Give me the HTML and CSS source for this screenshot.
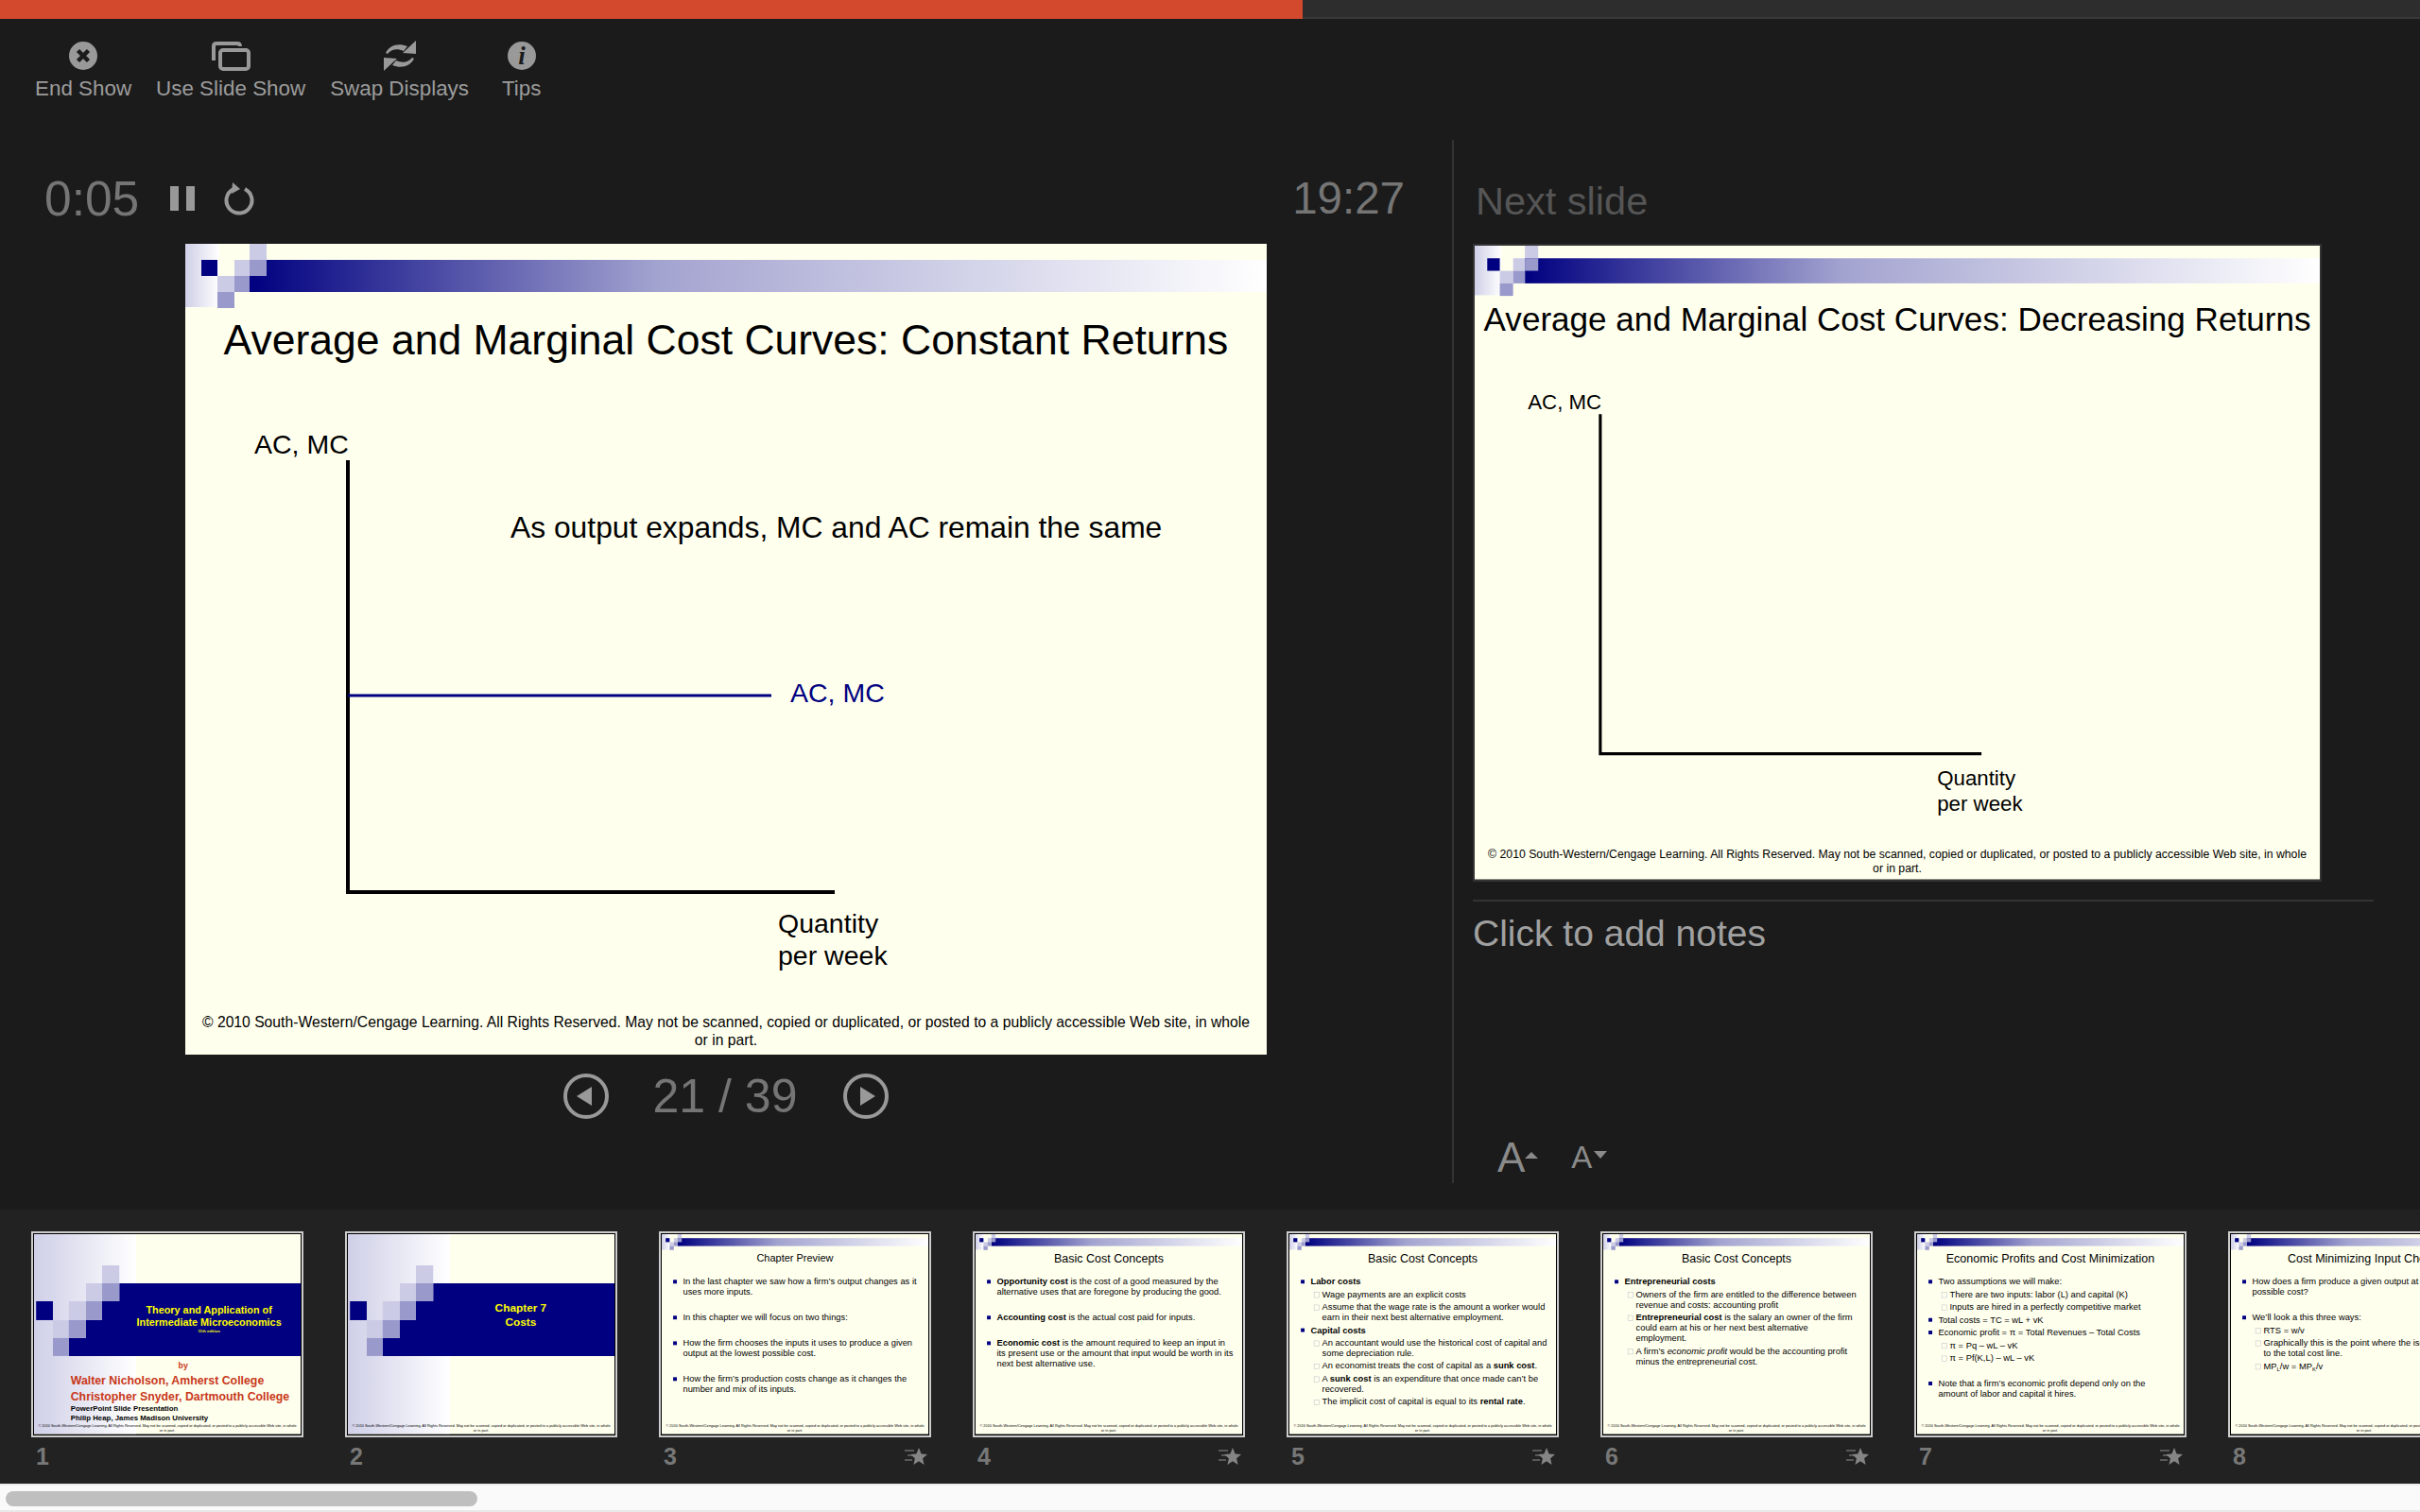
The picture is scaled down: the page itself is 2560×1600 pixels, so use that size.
FILE: index.html
```html
<!DOCTYPE html>
<html lang="en">
<head>
  <meta charset="UTF-8">
  <title>Presenter View</title>
  <link rel="stylesheet" href="styles.css">
</head>
<body>
  <!-- shared slide artwork -->
  <svg class="defs" width="0" height="0">
    <defs>
      <linearGradient id="bar-fade">
        <stop offset="0" stop-color="#000080"/>
        <stop offset=".4" stop-color="#a3a3d0"/>
        <stop offset=".82" stop-color="#e4e4f2"/>
        <stop offset="1" stop-color="#ffffff"/>
      </linearGradient>
      <linearGradient id="side-fade"><stop offset="0" stop-color="#cfcfe8"/><stop offset="1" stop-color="#ffffff"/></linearGradient>
      <symbol id="slide-header" viewBox="0 0 1144 858">
        <rect x="0" y="0" width="36" height="67" fill="url(#side-fade)"/>
        <rect x="68" y="17" width="1076" height="34" fill="url(#bar-fade)"/>
        <rect x="17" y="17" width="17" height="17" fill="#000080"/>
        <rect x="52" y="17" width="16" height="17" fill="#cbcbe6"/>
        <rect x="68" y="0" width="18" height="17" fill="#cbcbe6"/>
        <rect x="68" y="17" width="18" height="17" fill="#9999cc"/>
        <rect x="34" y="34" width="18" height="17" fill="#cbcbe6"/>
        <rect x="52" y="34" width="16" height="17" fill="#9999cc"/>
        <rect x="34" y="51" width="18" height="17" fill="#9999cc"/>
      </symbol>
      <symbol id="title-back" viewBox="0 0 1144 858">
        <rect x="0" y="0" width="438" height="858" fill="url(#side-fade)"/>
        <polygon points="366,211 1144,211 1144,523 149,523 149,446 223,446 223,369 292,369 292,288 366,288" fill="#000080"/>
        <rect x="9" y="288" width="72" height="81" fill="#000080"/>
        <rect x="292" y="134" width="74" height="77" fill="#cbcbe6"/>
        <rect x="223" y="211" width="69" height="77" fill="#cbcbe6"/>
        <rect x="292" y="211" width="74" height="77" fill="#9999cc"/>
        <rect x="149" y="288" width="74" height="81" fill="#cbcbe6"/>
        <rect x="223" y="288" width="69" height="81" fill="#9999cc"/>
        <rect x="81" y="369" width="68" height="77" fill="#cbcbe6"/>
        <rect x="149" y="369" width="74" height="77" fill="#9999cc"/>
        <rect x="81" y="446" width="68" height="77" fill="#9999cc"/>
      </symbol>
      <symbol id="star-fly" viewBox="0 0 24 18">
        <polygon points="15,0 17.6,6.4 24,6.9 19.1,11.2 20.6,18 15,14.3 9.4,18 10.9,11.2 6,6.9 12.4,6.4"/>
        <rect x="0" y="2" width="10" height="2" opacity=".55"/>
        <rect x="3" y="7" width="5" height="2" opacity=".55"/>
        <rect x="0" y="12" width="8" height="2" opacity=".55"/>
      </symbol>
    </defs>
  </svg>

  <div class="progress"><div class="progress-fill"></div></div>

  <div class="toolbar">
    <div class="tool tool-end">
      <svg class="tool-icon" width="32" height="32" viewBox="0 0 32 32">
        <circle cx="16" cy="16" r="15"/>
        <path d="M10.5 10.5 L21.5 21.5 M21.5 10.5 L10.5 21.5" class="cut"/>
      </svg>
      <span>End Show</span>
    </div>
    <div class="tool tool-use">
      <svg class="tool-icon" width="42" height="32" viewBox="0 0 42 32">
        <path d="M3 21 V6 Q3 3 6 3 H28 Q31 3 31 6" class="line"/>
        <rect x="10" y="10" width="30" height="20" rx="3" class="line"/>
      </svg>
      <span>Use Slide Show</span>
    </div>
    <div class="tool tool-swap">
      <svg class="tool-icon" width="36" height="32" viewBox="0 0 36 32">
        <g id="swap-arrow">
          <path d="M3 13 C7 5 16 2 26 6 L22 11 C15 8 9 9 5 14 Z"/>
          <polygon points="35,0 35,14 21,13"/>
        </g>
        <use href="#swap-arrow" transform="rotate(180 18 16)"/>
      </svg>
      <span>Swap Displays</span>
    </div>
    <div class="tool tool-tips">
      <svg class="tool-icon" width="32" height="32" viewBox="0 0 32 32">
        <circle cx="16" cy="16" r="15"/>
        <text x="16" y="25" class="info-i">i</text>
      </svg>
      <span>Tips</span>
    </div>
  </div>

  <div class="presenter">
    <div class="stage">
      <div class="timers">
        <div class="timer-left">
          <span class="time">0:05</span>
          <div class="pause"><i></i><i></i></div>
          <svg class="reset" width="36" height="36" viewBox="0 0 36 36">
            <path d="M12 8 A13.5 13.5 0 1 0 24 8" class="line"/>
            <polygon points="11,1 19,8 10,13"/>
          </svg>
        </div>
        <span class="time time-left">19:27</span>
      </div>

      <div class="slide slide-main">
        <svg class="slide-art"><use href="#slide-header"/></svg>
        <h2 class="slide-head">Average and Marginal Cost Curves: Constant Returns</h2>
        <svg class="slide-art chart" viewBox="0 0 1144 858">
          <text x="73" y="222">AC, MC</text>
          <text x="344" y="311" class="note">As output expands, MC and AC remain the same</text>
          <path d="M172 229 V688 M170 686 H687" class="axis"/>
          <path d="M172 478 H620" class="cost-line"/>
          <text x="640" y="485" class="navy">AC, MC</text>
          <text x="627" y="729">Quantity</text>
          <text x="627" y="763">per week</text>
        </svg>
        <p class="slide-foot">© 2010 South-Western/Cengage Learning. All Rights Reserved. May not be scanned, copied or duplicated, or posted to a publicly accessible Web site, in whole<br>or in part.</p>
      </div>

      <div class="slide-nav">
        <svg width="48" height="48" viewBox="0 0 48 48"><circle cx="24" cy="24" r="22" class="line"/><polygon points="14,24 30,14 30,34"/></svg>
        <span class="time page">21 / 39</span>
        <svg width="48" height="48" viewBox="0 0 48 48"><circle cx="24" cy="24" r="22" class="line"/><polygon points="34,24 18,14 18,34"/></svg>
      </div>
    </div>

    <div class="side">
      <div class="next-label">Next slide</div>
      <div class="next-frame">
        <div class="slide slide-next">
          <svg class="slide-art"><use href="#slide-header"/></svg>
          <h2 class="slide-head">Average and Marginal Cost Curves: Decreasing Returns</h2>
          <svg class="slide-art chart" viewBox="0 0 1144 858">
            <text x="72" y="221">AC, MC</text>
            <path d="M170 228 V690 M168 688 H686" class="axis"/>
            <text x="626" y="731">Quantity</text>
            <text x="626" y="765">per week</text>
          </svg>
          <p class="slide-foot">© 2010 South-Western/Cengage Learning. All Rights Reserved. May not be scanned, copied or duplicated, or posted to a publicly accessible Web site, in whole<br>or in part.</p>
        </div>
      </div>
      <div class="notes-rule"></div>
      <div class="notes">Click to add notes</div>
      <div class="font-tools">
        <span class="font-up">A<i></i></span>
        <span class="font-down">A<i></i></span>
      </div>
    </div>
  </div>

  <div class="filmstrip">
    <div class="film-item">
      <div class="thumb"><div class="thumb-in"><div class="slide slide-thumb">
        <svg class="slide-art"><use href="#title-back"/></svg>
        <div class="band-text band-text-1">
          <div>Theory and Application of</div>
          <div>Intermediate Microeconomics</div>
          <div class="edition">11th edition</div>
        </div>
        <div class="byline">
          <div class="by">by</div>
          <div class="author">Walter Nicholson, Amherst College</div>
          <div class="author">Christopher Snyder, Dartmouth College</div>
          <div class="credit credit-first">PowerPoint Slide Presentation</div>
          <div class="credit">Philip Heap, James Madison University</div>
        </div>
        <p class="slide-foot">© 2010 South-Western/Cengage Learning. All Rights Reserved. May not be scanned, copied or duplicated, or posted to a publicly accessible Web site, in whole<br>or in part.</p>
      </div></div></div>
      <div class="film-label"><span>1</span></div>
    </div>

    <div class="film-item">
      <div class="thumb"><div class="thumb-in"><div class="slide slide-thumb">
        <svg class="slide-art"><use href="#title-back"/></svg>
        <div class="band-text band-text-2">
          <div>Chapter 7</div>
          <div>Costs</div>
        </div>
        <p class="slide-foot">© 2010 South-Western/Cengage Learning. All Rights Reserved. May not be scanned, copied or duplicated, or posted to a publicly accessible Web site, in whole<br>or in part.</p>
      </div></div></div>
      <div class="film-label"><span>2</span></div>
    </div>

    <div class="film-item">
      <div class="thumb"><div class="thumb-in"><div class="slide slide-thumb">
        <svg class="slide-art"><use href="#slide-header"/></svg>
        <h3 class="thumb-head thumb-head-small">Chapter Preview</h3>
        <ul class="bullets">
          <li>In the last chapter we saw how a firm’s output changes as it<br>uses more inputs.</li>
          <li class="para">In this chapter we will focus on two things:</li>
          <li class="para">How the firm chooses the inputs it uses to produce a given<br>output at the lowest possible cost.</li>
          <li class="para">How the firm’s production costs change as it changes the<br>number and mix of its inputs.</li>
        </ul>
        <p class="slide-foot">© 2010 South-Western/Cengage Learning. All Rights Reserved. May not be scanned, copied or duplicated, or posted to a publicly accessible Web site, in whole<br>or in part.</p>
      </div></div></div>
      <div class="film-label"><span>3</span><svg class="star" width="24" height="18"><use href="#star-fly"/></svg></div>
    </div>

    <div class="film-item">
      <div class="thumb"><div class="thumb-in"><div class="slide slide-thumb">
        <svg class="slide-art"><use href="#slide-header"/></svg>
        <h3 class="thumb-head">Basic Cost Concepts</h3>
        <ul class="bullets">
          <li><b>Opportunity cost</b> is the cost of a good measured by the<br>alternative uses that are foregone by producing the good.</li>
          <li class="para"><b>Accounting cost</b> is the actual cost paid for inputs.</li>
          <li class="para"><b>Economic cost</b> is the amount required to keep an input in<br>its present use or the amount that input would be worth in its<br>next best alternative use.</li>
        </ul>
        <p class="slide-foot">© 2010 South-Western/Cengage Learning. All Rights Reserved. May not be scanned, copied or duplicated, or posted to a publicly accessible Web site, in whole<br>or in part.</p>
      </div></div></div>
      <div class="film-label"><span>4</span><svg class="star" width="24" height="18"><use href="#star-fly"/></svg></div>
    </div>

    <div class="film-item">
      <div class="thumb"><div class="thumb-in"><div class="slide slide-thumb">
        <svg class="slide-art"><use href="#slide-header"/></svg>
        <h3 class="thumb-head">Basic Cost Concepts</h3>
        <ul class="bullets">
          <li><b>Labor costs</b></li>
          <li class="sub">Wage payments are an explicit costs</li>
          <li class="sub">Assume that the wage rate is the amount a worker would<br>earn in their next best alternative employment.</li>
          <li><b>Capital costs</b></li>
          <li class="sub">An accountant would use the historical cost of capital and<br>some depreciation rule.</li>
          <li class="sub">An economist treats the cost of capital as a <b>sunk cost</b>.</li>
          <li class="sub">A <b>sunk cost</b> is an expenditure that once made can’t be<br>recovered.</li>
          <li class="sub">The implicit cost of capital is equal to its <b>rental rate</b>.</li>
        </ul>
        <p class="slide-foot">© 2010 South-Western/Cengage Learning. All Rights Reserved. May not be scanned, copied or duplicated, or posted to a publicly accessible Web site, in whole<br>or in part.</p>
      </div></div></div>
      <div class="film-label"><span>5</span><svg class="star" width="24" height="18"><use href="#star-fly"/></svg></div>
    </div>

    <div class="film-item">
      <div class="thumb"><div class="thumb-in"><div class="slide slide-thumb">
        <svg class="slide-art"><use href="#slide-header"/></svg>
        <h3 class="thumb-head">Basic Cost Concepts</h3>
        <ul class="bullets">
          <li><b>Entrepreneurial costs</b></li>
          <li class="sub">Owners of the firm are entitled to the difference between<br>revenue and costs: accounting profit</li>
          <li class="sub"><b>Entrepreneurial cost</b> is the salary an owner of the firm<br>could earn at his or her next best alternative<br>employment.</li>
          <li class="sub">A firm’s <i>economic profit</i> would be the accounting profit<br>minus the entrepreneurial cost.</li>
        </ul>
        <p class="slide-foot">© 2010 South-Western/Cengage Learning. All Rights Reserved. May not be scanned, copied or duplicated, or posted to a publicly accessible Web site, in whole<br>or in part.</p>
      </div></div></div>
      <div class="film-label"><span>6</span><svg class="star" width="24" height="18"><use href="#star-fly"/></svg></div>
    </div>

    <div class="film-item">
      <div class="thumb"><div class="thumb-in"><div class="slide slide-thumb">
        <svg class="slide-art"><use href="#slide-header"/></svg>
        <h3 class="thumb-head">Economic Profits and Cost Minimization</h3>
        <ul class="bullets">
          <li>Two assumptions we will make:</li>
          <li class="sub">There are two inputs: labor (L) and capital (K)</li>
          <li class="sub">Inputs are hired in a perfectly competitive market</li>
          <li>Total costs = TC = wL + vK</li>
          <li>Economic profit = π = Total Revenues – Total Costs</li>
          <li class="sub">π = Pq – wL – vK</li>
          <li class="sub">π = Pf(K,L) – wL – vK</li>
          <li class="para">Note that a firm’s economic profit depend only on the<br>amount of labor and capital it hires.</li>
        </ul>
        <p class="slide-foot">© 2010 South-Western/Cengage Learning. All Rights Reserved. May not be scanned, copied or duplicated, or posted to a publicly accessible Web site, in whole<br>or in part.</p>
      </div></div></div>
      <div class="film-label"><span>7</span><svg class="star" width="24" height="18"><use href="#star-fly"/></svg></div>
    </div>

    <div class="film-item">
      <div class="thumb"><div class="thumb-in"><div class="slide slide-thumb">
        <svg class="slide-art"><use href="#slide-header"/></svg>
        <h3 class="thumb-head">Cost Minimizing Input Choice</h3>
        <ul class="bullets">
          <li>How does a firm produce a given output at the lowest<br>possible cost?</li>
          <li class="para">We’ll look a this three ways:</li>
          <li class="sub">RTS = w/v</li>
          <li class="sub">Graphically this is the point where the isoquant is tangent<br>to the total cost line.</li>
          <li class="sub">MP<sub>L</sub>/w = MP<sub>K</sub>/v</li>
        </ul>
        <p class="slide-foot">© 2010 South-Western/Cengage Learning. All Rights Reserved. May not be scanned, copied or duplicated, or posted to a publicly accessible Web site, in whole<br>or in part.</p>
      </div></div></div>
      <div class="film-label"><span>8</span></div>
    </div>
  </div>

  <div class="scrollbar"><div class="scroll-thumb"></div></div>
</body>
</html>
```

FILE: styles.css
```css
*{
  box-sizing: border-box;
}
html, body{
  margin: 0;
  height: 100%;
}
body{
  width: 2560px;
  height: 1600px;
  overflow: hidden;
  display: flex;
  flex-direction: column;
  background-color: #1b1b1b;
  color: #999;
  font-family: "Liberation Sans", Arial, sans-serif;
}
.defs{
  position: absolute;
}
svg{
  display: block;
  fill: #999;
}
.line{
  fill: none;
  stroke: #999;
  stroke-width: 4;
}
.cut{
  fill: none;
  stroke: #1b1b1b;
  stroke-width: 4.5;
}

/* top progress */
.progress{
  height: 20px;
  flex: none;
  background-color: #2d2d2d;
  border-bottom: 2px solid #383838;
}
.progress-fill{
  width: 1378px;
  height: 20px;
  background-color: #d2492d;
}

/* toolbar */
.toolbar{
  height: 128px;
  flex: none;
  display: flex;
  padding: 23px 0 0 37px;
  gap: 26px;
}
.tool{
  display: flex;
  flex-direction: column;
  align-items: center;
  font-size: 22.4px;
  line-height: 30px;
  color: #9c9c9c;
}
.tool-icon{
  margin-bottom: 4px;
}
.tool-tips{
  margin-left: 9px;
}
.info-i{
  fill: #1b1b1b;
  font-family: "Liberation Serif", serif;
  font-style: italic;
  font-weight: bold;
  font-size: 27px;
  text-anchor: middle;
}

/* middle */
.presenter{
  height: 1104px;
  flex: none;
  display: flex;
}
.stage{
  width: 1536px;
  flex: none;
  padding-top: 32px;
}
.timers{
  display: flex;
  justify-content: space-between;
  align-items: center;
  height: 60px;
  padding: 0 50px 0 47px;
  margin-bottom: 18px;
}
.timer-left{
  display: flex;
  align-items: center;
}
.time{
  font-size: 51.5px;
  line-height: 60px;
  color: #757575;
}
.time-left{
  font-size: 47.5px;
}
.pause{
  display: flex;
  gap: 8px;
  margin-left: 33px;
  margin-right: 29px;
}
.pause i{
  width: 9px;
  height: 26px;
  background-color: #999;
}
.slide-nav{
  display: flex;
  justify-content: center;
  align-items: center;
  height: 48px;
  margin-top: 20px;
}
.page{
  width: 248px;
  padding-right: 2px;
  font-size: 50px;
  text-align: center;
}

.side{
  width: 1024px;
  flex: none;
  display: flex;
  flex-direction: column;
  border-left: 2px solid #333;
  padding: 40px 0 5px 20px;
}
.next-label{
  font-size: 41.5px;
  line-height: 50px;
  color: #555;
  padding-left: 3px;
  margin-bottom: 20px;
}
.next-frame{
  width: 898px;
  height: 675px;
  border: 2px solid #333;
  overflow: hidden;
}
.notes-rule{
  width: 953px;
  height: 2px;
  margin-top: 19px;
  background-color: #333;
}
.notes{
  margin-top: 12px;
  font-size: 39px;
  line-height: 44px;
  color: #a0a0a0;
}
.font-tools{
  margin-top: auto;
  padding-left: 26px;
  display: flex;
  align-items: center;
  gap: 35px;
  color: #8a8a8a;
}
.font-up, .font-down{
  display: flex;
  align-items: center;
}
.font-up{
  font-size: 44px;
  line-height: 44px;
}
.font-down{
  font-size: 33px;
  line-height: 44px;
}
.font-up i{
  width: 0;
  height: 0;
  margin-top: -6px;
  border-left: 7px solid transparent;
  border-right: 7px solid transparent;
  border-bottom: 7px solid #8a8a8a;
}
.font-down i{
  width: 0;
  height: 0;
  margin-left: 2px;
  margin-top: -6px;
  border-left: 7px solid transparent;
  border-right: 7px solid transparent;
  border-top: 8px solid #8a8a8a;
}

/* slide canvas, always 1144 wide and scaled down */
.slide{
  position: relative;
  width: 1144px;
  height: 858px;
  background-color: #ffffee;
  color: #000;
  overflow: hidden;
  transform-origin: 0 0;
}
.slide-main{
  margin: 0 auto;
}
.slide-next{
  transform: scale(.7815);
}
.slide-thumb{
  transform: scale(.2465);
}
.slide-art{
  position: absolute;
  left: 0;
  top: 0;
  width: 1144px;
  height: 858px;
}
.slide-head{
  position: absolute;
  left: 0;
  right: 0;
  top: 74px;
  margin: 0;
  font-size: 44.5px;
  line-height: 56px;
  font-weight: normal;
  text-align: center;
}
.slide-next .slide-head{
  top: 72px;
  font-size: 44.9px;
}
.chart text{
  fill: #000;
  font-size: 28.5px;
}
.chart .note{
  font-size: 31.8px;
}
.chart .navy{
  fill: #000080;
}
.axis{
  fill: none;
  stroke: #000;
  stroke-width: 4;
}
.cost-line{
  fill: none;
  stroke: #000080;
  stroke-width: 3;
}
.slide-foot{
  position: absolute;
  left: 0;
  right: 0;
  top: 814px;
  margin: 0;
  font-size: 15.7px;
  line-height: 19px;
  text-align: center;
}

/* filmstrip */
.filmstrip{
  margin-top: 28px;
  height: 290px;
  flex: none;
  display: flex;
  gap: 44px;
  padding: 23px 0 0 33px;
  background-color: #222;
  overflow: hidden;
}
.film-item{
  width: 288px;
  flex: none;
}
.thumb{
  width: 288px;
  height: 218px;
  border: 2px solid #ccc;
  overflow: hidden;
}
.thumb-in{
  width: 284px;
  height: 214px;
  border: 1px solid #000;
  overflow: hidden;
}
.film-label{
  display: flex;
  justify-content: space-between;
  align-items: center;
  height: 30px;
  margin-top: 5px;
  padding: 0 4px 0 5px;
  font-size: 25px;
  font-weight: bold;
  color: #777;
}
.star{
  fill: #858585;
}
.thumb-head{
  position: relative;
  margin: 0;
  padding-top: 76px;
  font-size: 50.8px;
  line-height: 56px;
  font-weight: normal;
  text-align: center;
}
.thumb-head-small{
  font-size: 44.5px;
}
.bullets{
  position: relative;
  list-style: none;
  margin: 49px 0 0;
  padding: 0 0 0 91px;
  font-size: 38px;
  line-height: 44.6px;
}
.bullets li{
  position: relative;
  margin-top: 10px;
}
.bullets li:first-child{
  margin-top: 0;
}
.bullets li::before{
  content: "";
  position: absolute;
  left: -42px;
  top: 15px;
  width: 16px;
  height: 16px;
  background-color: #000080;
}
.bullets .para{
  margin-top: 65px;
}
.bullets .sub{
  margin-left: 49px;
}
.bullets .sub::before{
  left: -35px;
  top: 13px;
  width: 20px;
  height: 20px;
  background-color: transparent;
  border: 2px solid #bbbbc6;
}
.bullets sub{
  font-size: 24px;
  line-height: 0;
}
.band-text{
  position: absolute;
  left: 340px;
  right: 0;
  color: #ffff00;
  font-weight: bold;
  text-align: center;
}
.band-text-1{
  top: 298px;
  left: 366px;
  right: 8px;
  font-size: 44px;
  line-height: 54px;
}
.edition{
  font-size: 17px;
  line-height: 18px;
}
.band-text-2{
  top: 286px;
  font-size: 48px;
  line-height: 61px;
}
.byline{
  position: absolute;
  left: 157px;
  top: 536px;
  font-weight: bold;
  color: #c8381a;
}
.by{
  font-size: 36px;
  line-height: 58px;
  padding-left: 462px;
}
.author{
  font-size: 50px;
  line-height: 68px;
  white-space: nowrap;
}
.credit{
  font-size: 31.8px;
  line-height: 41px;
  color: #000;
  white-space: nowrap;
}
.credit-first{
  margin-top: -4px;
}

/* scrollbar */
.scrollbar{
  height: 30px;
  flex: none;
  padding: 8px 6px;
  background-color: #fafafa;
  border-top: 2px solid #ececec;
  border-bottom: 2px solid #e8e8e8;
}
.scroll-thumb{
  width: 499px;
  height: 16px;
  margin-top: -2px;
  border-radius: 8px;
  background-color: #bfbfbf;
}
```
